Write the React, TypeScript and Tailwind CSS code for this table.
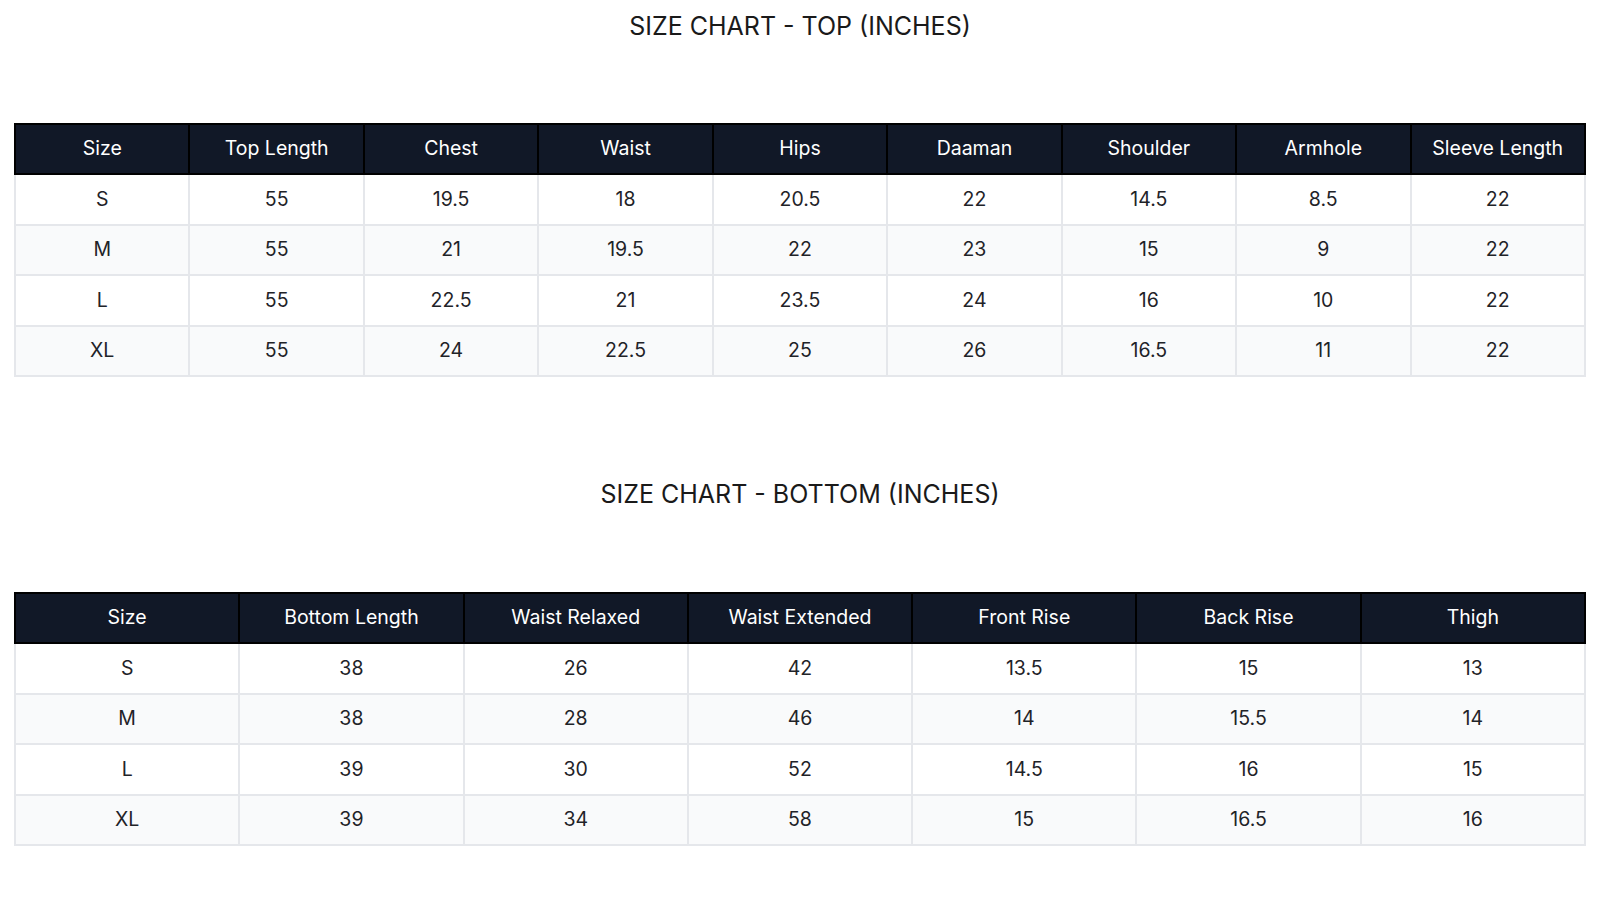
const topHeaders = ["Size", "Top Length", "Chest", "Waist", "Hips", "Daaman", "Shoulder", "Armhole", "Sleeve Length"];
const topRows = [
  ["S", "55", "19.5", "18", "20.5", "22", "14.5", "8.5", "22"],
  ["M", "55", "21", "19.5", "22", "23", "15", "9", "22"],
  ["L", "55", "22.5", "21", "23.5", "24", "16", "10", "22"],
  ["XL", "55", "24", "22.5", "25", "26", "16.5", "11", "22"],
];

const bottomHeaders = ["Size", "Bottom Length", "Waist Relaxed", "Waist Extended", "Front Rise", "Back Rise", "Thigh"];
const bottomRows = [
  ["S", "38", "26", "42", "13.5", "15", "13"],
  ["M", "38", "28", "46", "14", "15.5", "14"],
  ["L", "39", "30", "52", "14.5", "16", "15"],
  ["XL", "39", "34", "58", "15", "16.5", "16"],
];

function SizeTable({ headers, rows }: { headers: string[]; rows: string[][] }) {
  return (
    <table className="w-full table-fixed border-collapse border-2 border-gray-200">
      <thead>
        <tr className="bg-[#111827]">
          {headers.map((h) => (
            <th key={h} className="h-[50px] border-2 border-black text-[19.5px] font-normal text-white">
              {h}
            </th>
          ))}
        </tr>
      </thead>
      <tbody>
        {rows.map((row, i) => (
          <tr key={row[0]} className={i % 2 === 0 ? "bg-white" : "bg-gray-50"}>
            {row.map((cell, j) => (
              <td key={j} className="h-[50.5px] border-2 border-gray-200 text-center text-[19.5px] text-[#1f2328]">
                {cell}
              </td>
            ))}
          </tr>
        ))}
      </tbody>
    </table>
  );
}

export default function App() {
  return (
    <div className="min-h-screen bg-white px-[14px] pt-[8px] font-['Inter',sans-serif]">
      <h2 className="text-center text-[25px] leading-[36px] text-[#1a1a1a]">SIZE CHART - TOP (INCHES)</h2>
      <div className="mt-[79px]">
        <SizeTable headers={topHeaders} rows={topRows} />
      </div>

      <h2 className="mt-[99px] text-center text-[25px] leading-[36px] text-[#1a1a1a]">SIZE CHART - BOTTOM (INCHES)</h2>
      <div className="mt-[80px]">
        <SizeTable headers={bottomHeaders} rows={bottomRows} />
      </div>
    </div>
  );
}
